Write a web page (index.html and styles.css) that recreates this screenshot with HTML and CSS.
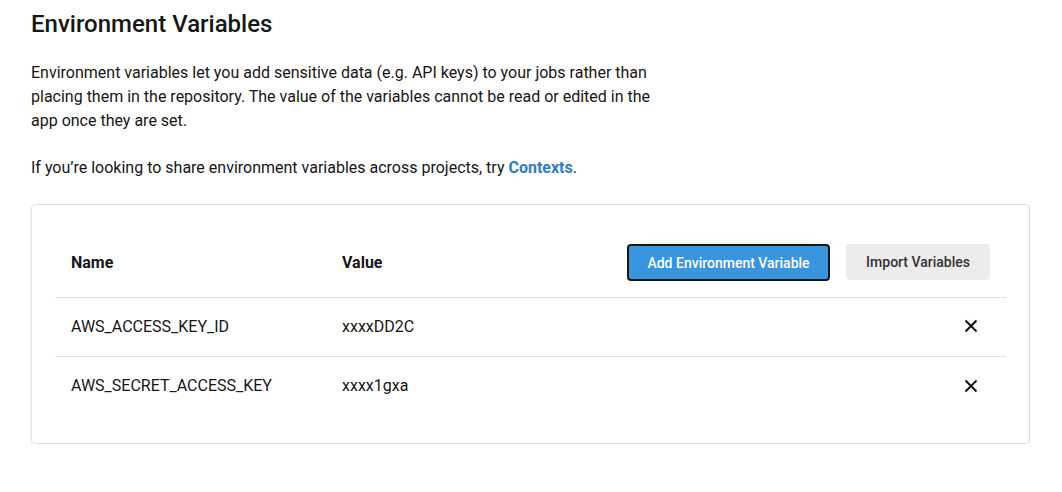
FILE: index.html
```html
<!DOCTYPE html>
<html>
<head>
<meta charset="utf-8">
<link rel="stylesheet" href="styles.css">
</head>
<body>
<main class="page">
  <h1 class="title">Environment Variables</h1>
  <p class="intro">Environment variables let you add sensitive data (e.g. API keys) to your jobs rather than placing them in the repository. The value of the variables cannot be read or edited in the app once they are set.</p>
  <p class="intro share">If you’re looking to share environment variables across projects, try <a class="link" href="#">Contexts</a>.</p>
  <section class="card">
    <table class="vars">
      <thead>
        <tr>
          <th class="col-name">Name</th>
          <th class="col-value">Value</th>
          <th class="col-actions">
            <div class="actions">
              <button class="btn btn-primary">Add Environment Variable</button>
              <button class="btn btn-secondary">Import Variables</button>
            </div>
          </th>
        </tr>
      </thead>
      <tbody>
        <tr>
          <td>AWS_ACCESS_KEY_ID</td>
          <td>xxxxDD2C</td>
          <td class="col-actions">
            <button class="remove" aria-label="Delete">
              <svg width="14" height="14" viewBox="0 0 14 14"><path d="M1.5 1.5L12.5 12.5M12.5 1.5L1.5 12.5" stroke="#111" stroke-width="2" fill="none"/></svg>
            </button>
          </td>
        </tr>
        <tr>
          <td>AWS_SECRET_ACCESS_KEY</td>
          <td>xxxx1gxa</td>
          <td class="col-actions">
            <button class="remove" aria-label="Delete">
              <svg width="14" height="14" viewBox="0 0 14 14"><path d="M1.5 1.5L12.5 12.5M12.5 1.5L1.5 12.5" stroke="#111" stroke-width="2" fill="none"/></svg>
            </button>
          </td>
        </tr>
      </tbody>
    </table>
  </section>
</main>
</body>
</html>
```
FILE: styles.css
```css
* { box-sizing: border-box; }
html, body { margin: 0; padding: 0; background: #fff; }
body {
  font-family: Roboto, "Liberation Sans", Arial, sans-serif;
  color: #161616;
}
.page {
  padding: 6px 32px 0 31px;
}
.title {
  margin: 0 0 19px;
  font-size: 24px;
  line-height: 36px;
  font-weight: 500;
}
.intro {
  margin: 0;
  max-width: 640px;
  font-size: 16px;
  line-height: 24px;
}
.share {
  margin-top: 23px;
}
.link {
  color: #2e7dc2;
  font-weight: 700;
  text-decoration: none;
}
.card {
  margin-top: 24px;
  border: 1px solid #e0e0e0;
  border-radius: 4px;
  box-shadow: 0 1px 2px rgba(0,0,0,0.06);
  padding: 24px 23px 28px;
}
.vars {
  width: 100%;
  border-collapse: collapse;
  font-size: 16px;
}
.vars th, .vars td {
  text-align: left;
  padding: 0 16px;
  vertical-align: middle;
}
.vars th {
  height: 68px;
  font-weight: 700;
}
.vars td {
  height: 59px;
  border-top: 1px solid #e3e3e3;
}
.col-name { width: 271px; }
.vars .col-actions { text-align: right; }
.actions {
  display: flex;
  justify-content: flex-end;
  gap: 16px;
}
.btn {
  font-family: inherit;
  font-size: 14px;
  font-weight: 500;
  height: 36px;
  padding: 0 20px;
  border-radius: 4px;
  cursor: pointer;
}
.btn-primary {
  background: #3895de;
  color: #fff;
  border: 2px solid #161616;
  height: 37px;
  padding: 0 18.5px;
}
.btn-secondary {
  background: #ececec;
  color: #333;
  border: none;
  padding: 0 20px;
}
.remove {
  background: none;
  border: none;
  padding: 0;
  margin-right: 12px;
  margin-top: -3px;
  display: inline-flex;
  vertical-align: middle;
  cursor: pointer;
}
```
